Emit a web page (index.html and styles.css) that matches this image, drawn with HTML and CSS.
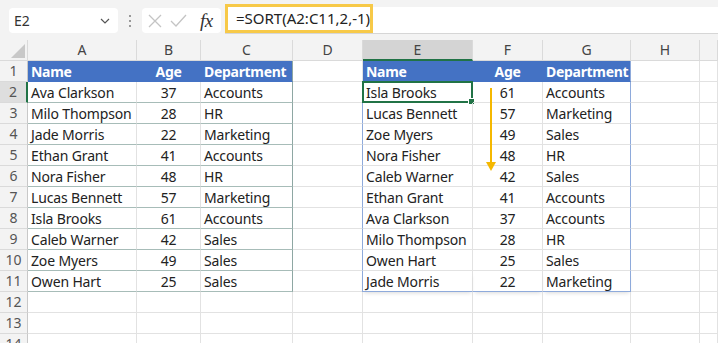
FILE: index.html
```html
<!DOCTYPE html>
<html lang="en">
<head>
  <meta charset="UTF-8" />
  <title>SORT</title>
  <link rel="stylesheet" href="styles.css">
</head>
<body>

  <div class="toolbar">
    <div class="namebox">
      <span>E2</span>
      <svg width="10" height="6" viewBox="0 0 10 6"><polyline points="1,1 5,5 9,1" fill="none" stroke="#555" stroke-width="1.2"/></svg>
    </div>
    <div class="dots"><i></i><i></i><i></i></div>
    <div class="fxbox">
      <svg width="14" height="14" viewBox="0 0 14 14"><path d="M1 1 L13 13 M13 1 L1 13" stroke="#c4c4c4" stroke-width="1.3"/></svg>
      <svg width="17" height="14" viewBox="0 0 17 14"><polyline points="1,7 6,12 16,1" fill="none" stroke="#c4c4c4" stroke-width="1.3"/></svg>
      <span class="fx">fx</span>
    </div>
    <div class="formula">
      <span class="formula-text">=SORT(A2:C11,2,-1)</span>
    </div>
  </div>

  <div class="sheet">
    <div class="corner"><svg width="14" height="14" viewBox="0 0 14 14"><polygon points="14,0 14,14 0,14" fill="#c8c8c8"/></svg></div>
    <div class="col">A</div>
    <div class="col">B</div>
    <div class="col">C</div>
    <div class="col">D</div>
    <div class="col sel">E</div>
    <div class="col">F</div>
    <div class="col">G</div>
    <div class="col">H</div>
    <div class="col"></div>
  </div>

  <div class="sheet" id="rows"></div>

  <svg class="arrow" width="12" height="84" viewBox="0 0 12 84">
    <line x1="6" y1="0" x2="6" y2="76" stroke="#f5b800" stroke-width="2"/>
    <polygon points="1,74 11,74 6,83" fill="#f5b800"/>
  </svg>

  <script>
    const left = [
      ["Ava Clarkson", 37, "Accounts"],
      ["Milo Thompson", 28, "HR"],
      ["Jade Morris", 22, "Marketing"],
      ["Ethan Grant", 41, "Accounts"],
      ["Nora Fisher", 48, "HR"],
      ["Lucas Bennett", 57, "Marketing"],
      ["Isla Brooks", 61, "Accounts"],
      ["Caleb Warner", 42, "Sales"],
      ["Zoe Myers", 49, "Sales"],
      ["Owen Hart", 25, "Sales"]
    ];
    const sorted = left.slice().sort((a, b) => b[1] - a[1]);

    const rows = document.getElementById("rows");
    let html = "";
    for (let r = 1; r <= 14; r++) {
      html += `<div class="rowhead${r === 2 ? " sel" : ""}">${r}</div>`;
      if (r === 1) {
        html += `<div class="cell hd l">Name</div><div class="cell hd l c">Age</div><div class="cell hd l last">Department</div>`;
        html += `<div class="cell"></div>`;
        html += `<div class="cell hd r">Name</div><div class="cell hd r c">Age</div><div class="cell hd r last">Department</div>`;
      } else if (r <= 11) {
        const a = left[r - 2], b = sorted[r - 2];
        const end = r === 11 ? " end" : "";
        html += `<div class="cell l${end}">${a[0]}</div><div class="cell l c${end}">${a[1]}</div><div class="cell l last${end}">${a[2]}</div>`;
        html += `<div class="cell"></div>`;
        html += `<div class="cell r first${end}">${b[0]}${r === 2 ? '<span class="active"></span>' : ""}</div><div class="cell r c${end}">${b[1]}</div><div class="cell r last${end}">${b[2]}</div>`;
      } else {
        html += `<div class="cell"></div><div class="cell"></div><div class="cell"></div><div class="cell"></div><div class="cell"></div><div class="cell"></div><div class="cell"></div>`;
      }
      html += `<div class="cell"></div><div class="cell"></div>`;
    }
    rows.innerHTML = html;
  </script>
</body>
</html>
```

FILE: styles.css
```css
body {
  margin: 0;
  background: #fff;
  font-family: 'Noto Sans', 'Open Sans', sans-serif;
  color: #222;
  height: 343px;
  overflow: hidden;
  position: relative;
}

.toolbar {
  height: 40px;
  background: #f3f3f3;
  display: flex;
  align-items: flex-start;
  box-sizing: border-box;
  padding: 8px 0 0 9px;
}

.namebox {
  width: 109px;
  height: 25px;
  background: #fff;
  border-radius: 4px;
  box-sizing: border-box;
  padding: 0 8px 0 5px;
  display: flex;
  align-items: center;
  justify-content: space-between;
  font-size: 14px;
  color: #333;
}

.dots {
  width: 24px;
  display: flex;
  flex-direction: column;
  align-items: center;
  gap: 3px;
  padding-top: 7px;
}

.dots i {
  width: 2px;
  height: 2px;
  background: #999;
}

.fxbox {
  width: 79px;
  height: 25px;
  background: #fff;
  border-radius: 4px;
  display: flex;
  align-items: center;
  gap: 8px;
  padding-left: 6px;
  box-sizing: border-box;
}

.fx {
  font-family: 'Liberation Serif', serif;
  font-style: italic;
  font-size: 19px;
  color: #333;
  margin-left: 5px;
  letter-spacing: -0.5px;
}

.formula {
  flex: 1;
  margin-left: 4px;
  margin-top: -1px;
  height: 26px;
  background: #fff;
  border-bottom: 1px solid #d6d6d6;
  position: relative;
}

.formula-text {
  position: absolute;
  left: 0;
  top: -3px;
  width: 148px;
  height: 29px;
  box-sizing: border-box;
  border: 3px solid #f7c948;
  font-size: 15px;
  line-height: 23px;
  padding-left: 8px;
  color: #222;
  white-space: nowrap;
}

.sheet {
  display: grid;
  grid-template-columns: 28px 109px 64px 92px 70px 110px 70px 88px 69px 1fr;
  grid-auto-rows: 21px;
}

.corner, .col {
  background: #f3f3f3;
  border-right: 1px solid #dadada;
  border-bottom: 1px solid #dadada;
  box-sizing: border-box;
}

.corner {
  display: flex;
  align-items: flex-end;
  justify-content: flex-end;
  padding: 0 2px 2px 0;
}

.col {
  text-align: center;
  font-size: 14px;
  line-height: 20px;
  color: #444;
}

.col.sel {
  background: #d4d4d4;
  border-bottom: 2px solid #217346;
  color: #444;
}

.rowhead {
  background: #f3f3f3;
  border-right: 1px solid #c8c8c8;
  border-bottom: 1px solid #dadada;
  box-sizing: border-box;
  text-align: center;
  font-size: 14px;
  line-height: 20px;
  color: #555;
}

.rowhead.sel {
  background: #dedede;
  border-right: 2px solid #217346;
}

.cell {
  border-right: 1px solid #e2e2e2;
  border-bottom: 1px solid #e2e2e2;
  box-sizing: border-box;
  font-size: 14px;
  letter-spacing: -0.15px;
  line-height: 21px;
  padding-left: 3px;
  white-space: nowrap;
  overflow: visible;
  position: relative;
}

.cell.c {
  text-align: center;
  padding-left: 0;
}

.cell.hd {
  background: #4472c4;
  color: #fff;
  font-weight: bold;
  letter-spacing: -0.3px;
}

.cell.l {
  border-bottom-color: #a7bcb8;
}

.cell.l.last {
  border-right-color: #8ea7a3;
}

.cell.hd.l {
  border-bottom-color: #4472c4;
  border-right-color: #4472c4;
}

.cell.hd.l.last {
  border-right-color: #8ea7a3;
}

.cell.r.first {
  border-left: 1px solid #8eaadb;
  margin-left: -1px;
}

.cell.hd.r {
  border-bottom-color: #4472c4;
  border-right-color: #4472c4;
}

.cell.r.last {
  border-right-color: #8eaadb;
}

.cell.r.end {
  border-bottom-color: #8eaadb;
  box-shadow: 0 3px 4px -2px rgba(0,0,0,0.15);
}

.active {
  position: absolute;
  left: -1px;
  top: -1px;
  right: -1px;
  bottom: -1px;
  border: 2px solid #217346;
}

.active::after {
  content: "";
  position: absolute;
  right: -4px;
  bottom: -4px;
  width: 5px;
  height: 5px;
  background: #217346;
  border: 1px solid #fff;
}

.arrow {
  position: absolute;
  left: 485px;
  top: 88px;
}
```
